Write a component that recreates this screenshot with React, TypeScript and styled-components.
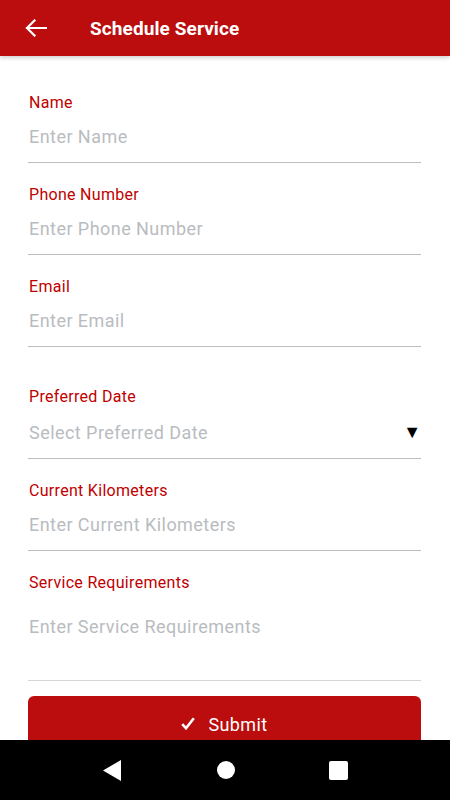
import styled, { createGlobalStyle } from 'styled-components'

const RED = '#bb0d0d'
const LABEL_RED = '#c00000'
const PLACEHOLDER = '#b9bcbf'

const GlobalStyle = createGlobalStyle`
  * { box-sizing: border-box; }
  body {
    margin: 0;
    font-family: Roboto, "Liberation Sans", Arial, sans-serif;
    background: #ffffff;
  }
`

const Screen = styled.div`
  width: 450px;
  height: 800px;
  display: flex;
  flex-direction: column;
  overflow: hidden;
  background: #ffffff;
`

const Header = styled.header`
  height: 56px;
  flex-shrink: 0;
  display: flex;
  align-items: center;
  padding-left: 24px;
  background: ${RED};
  box-shadow: 0 2px 4px rgba(0, 0, 0, 0.18);
  position: relative;
  z-index: 1;
`

const BackButton = styled.button`
  width: 24px;
  height: 24px;
  padding: 0;
  border: 0;
  background: transparent;
  display: flex;
  align-items: center;
  justify-content: center;
  margin-top: -1px;
`

const Title = styled.h1`
  margin: 0 0 0 42px;
  color: #ffffff;
  font-size: 19px;
  font-weight: 700;
  letter-spacing: 0.1px;
`

const Content = styled.main`
  flex: 1;
  overflow: hidden;
  padding: 15px 29px 0 28px;
`

const Field = styled.div<{ $top?: number }>`
  padding-top: ${(p) => p.$top ?? 22}px;
`

const Label = styled.label`
  display: block;
  padding-left: 1px;
  color: ${LABEL_RED};
  font-size: 16px;
  line-height: 19px;
  letter-spacing: 0.3px;
`

const InputRow = styled.div<{ $gap?: number; $bottom?: number; $line?: string }>`
  margin-top: ${(p) => p.$gap ?? 14}px;
  padding-bottom: ${(p) => p.$bottom ?? 15}px;
  border-bottom: 1px solid ${(p) => p.$line ?? '#bdbdbd'};
  display: flex;
  align-items: center;
`

const Input = styled.input`
  flex: 1;
  min-width: 0;
  padding: 0 0 0 1px;
  border: 0;
  outline: none;
  font-family: inherit;
  font-size: 18px;
  line-height: 21px;
  height: 21px;
  letter-spacing: 0.45px;
  color: #333333;
  background: transparent;
  &::placeholder {
    color: ${PLACEHOLDER};
    opacity: 1;
  }
`

const TextArea = styled.textarea`
  flex: 1;
  height: 44px;
  padding: 0 0 0 1px;
  border: 0;
  outline: none;
  resize: none;
  font-family: inherit;
  font-size: 18px;
  line-height: 21px;
  letter-spacing: 0.45px;
  background: transparent;
  &::placeholder {
    color: ${PLACEHOLDER};
    opacity: 1;
  }
`

const Caret = styled.span`
  color: #000000;
  font-size: 18px;
  line-height: 21px;
  margin-top: -2px;
`

const SubmitButton = styled.button`
  margin-top: 15px;
  width: 100%;
  height: 56px;
  border: 0;
  border-radius: 6px;
  background: ${RED};
  color: #ffffff;
  font-family: inherit;
  font-size: 18px;
  letter-spacing: 0.4px;
  display: flex;
  align-items: flex-start;
  justify-content: center;
  gap: 13px;
  padding-top: 18px;
  padding-left: 6px;
`

const NavBar = styled.nav`
  height: 60px;
  flex-shrink: 0;
  background: #000000;
  display: flex;
  align-items: center;
  justify-content: center;
  gap: 94px;
`

const NavIcon = styled.svg<{ $after?: number }>`
  display: block;
  margin-right: ${(p) => p.$after ?? 0}px;
`

const fields = [
  { label: 'Name', placeholder: 'Enter Name' },
  { label: 'Phone Number', placeholder: 'Enter Phone Number' },
  { label: 'Email', placeholder: 'Enter Email' },
]

const App = () => (
  <Screen>
    <GlobalStyle />
    <Header>
      <BackButton aria-label="Back">
        <svg width="22" height="18" viewBox="0 0 22 18" fill="none">
          <path d="M21 9H2M9.5 1.5L2 9l7.5 7.5" stroke="#ffffff" strokeWidth="2.2" strokeLinecap="square" />
        </svg>
      </BackButton>
      <Title>Schedule Service</Title>
    </Header>
    <Content>
      {fields.map((f) => (
        <Field key={f.label}>
          <Label>{f.label}</Label>
          <InputRow>
            <Input placeholder={f.placeholder} />
          </InputRow>
        </Field>
      ))}
      <Field $top={40}>
        <Label>Preferred Date</Label>
        <InputRow $gap={16} $bottom={15}>
          <Input placeholder="Select Preferred Date" readOnly />
          <Caret>▼</Caret>
        </InputRow>
      </Field>
      <Field>
        <Label>Current Kilometers</Label>
        <InputRow>
          <Input placeholder="Enter Current Kilometers" />
        </InputRow>
      </Field>
      <Field>
        <Label>Service Requirements</Label>
        <InputRow $gap={24} $bottom={20} $line="#d6d6d6">
          <TextArea placeholder="Enter Service Requirements" />
        </InputRow>
      </Field>
      <SubmitButton>
        <svg width="14" height="13" viewBox="0 0 14 13" style={{ marginTop: 3 }}>
          <path d="M1.2 7.2l3.8 4 7.8-10" stroke="#ffffff" strokeWidth="2.6" fill="none" />
        </svg>
        Submit
      </SubmitButton>
    </Content>
    <NavBar>
      <NavIcon width="18" height="21" viewBox="0 0 18 21" $after={2}>
        <path d="M18 0v21L0 10.5z" fill="#ffffff" />
      </NavIcon>
      <NavIcon width="18" height="18" viewBox="0 0 18 18">
        <circle cx="9" cy="9" r="9" fill="#ffffff" />
      </NavIcon>
      <NavIcon width="19" height="19" viewBox="0 0 19 19">
        <rect x="0" y="0" width="19" height="19" rx="2" fill="#ffffff" />
      </NavIcon>
    </NavBar>
  </Screen>
)

export default App
